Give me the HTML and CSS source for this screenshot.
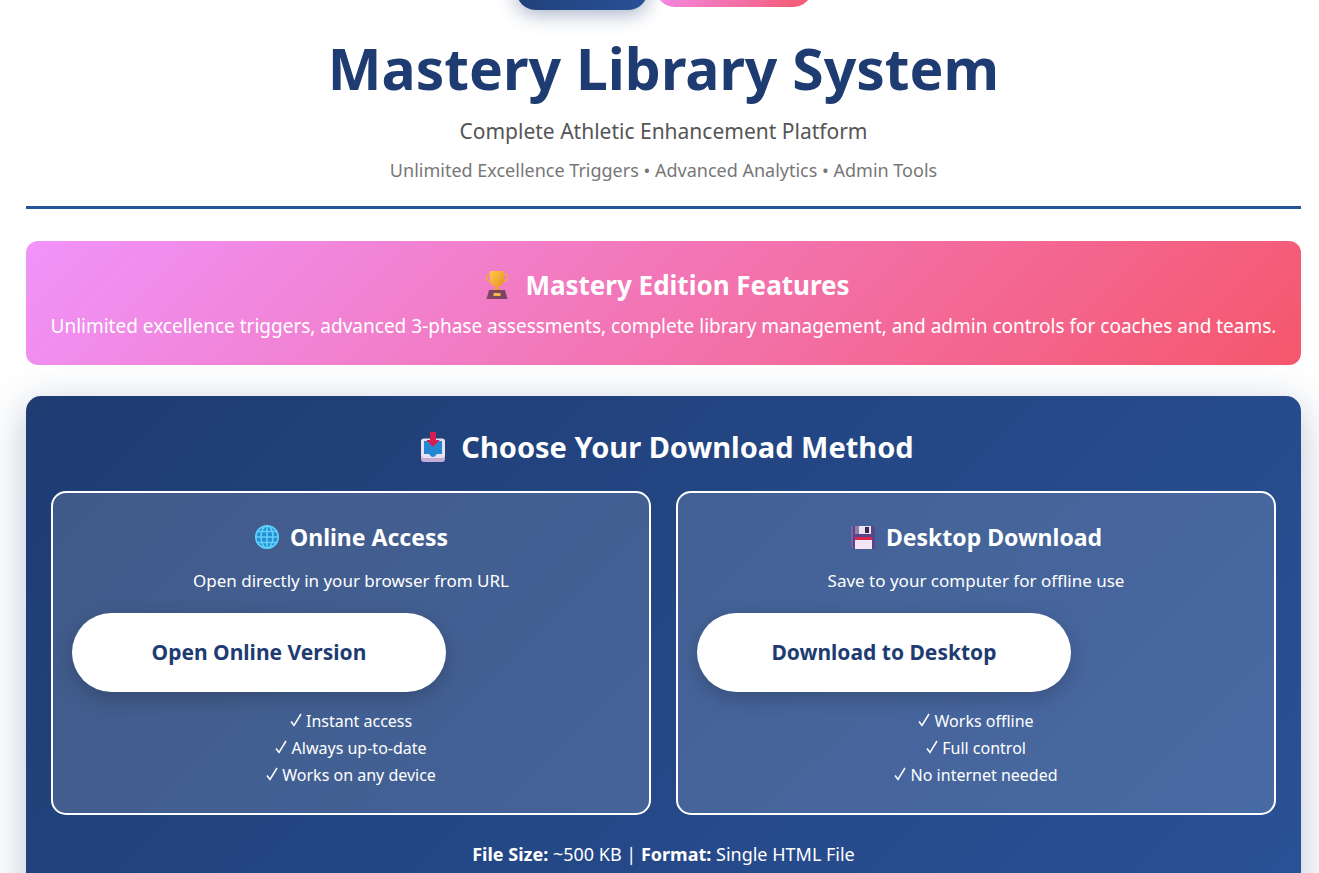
FILE: index.html
```html
<!DOCTYPE html>
<html lang="en">
<head>
  <meta charset="UTF-8" />
  <meta name="viewport" content="width=device-width, initial-scale=1.0">
  <title>Mastery Library System</title>
  <link rel="stylesheet" href="styles.css">
</head>
<body>
  <div class="container">
    <header class="header">
      <div class="badges">
        <span class="badge badge-blue"></span>
        <span class="badge badge-pink"></span>
      </div>
      <h1>Mastery Library System</h1>
      <p class="subtitle">Complete Athletic Enhancement Platform</p>
      <p class="tagline">Unlimited Excellence Triggers • Advanced Analytics • Admin Tools</p>
    </header>

    <section class="features">
      <h2>
        <svg class="icon icon-trophy" viewBox="0 0 28 30" aria-hidden="true">
          <defs>
            <linearGradient id="gold" x1="0" y1="0" x2="1" y2="1">
              <stop offset="0" stop-color="#ffc850" />
              <stop offset="0.6" stop-color="#f0a52d" />
              <stop offset="1" stop-color="#d8832c" />
            </linearGradient>
          </defs>
          <path d="M8 4.500H6a2.500 2.500 0 0 0-2.500 2.500c0 3 2 4.500 5.500 4.500M20 4.500h2A2.500 2.500 0 0 1 24.500 7c0 3-2 4.500-5.500 4.500" fill="none" stroke="#eda943" stroke-width="1.600" />
          <path d="M7 1h14v8c0 4-2 7-5.500 7.500V18l2.500 2v1h-8v-1l2.500-2v-1.500C9 16 7 13 7 9z" fill="url(#gold)" />
          <path d="M6 20h16l2.500 9h-21z" fill="#7d4763" />
          <rect x="10.500" y="23" width="7" height="3" fill="#f5b94f" />
        </svg>
        Mastery Edition Features
      </h2>
      <p>Unlimited excellence triggers, advanced 3-phase assessments, complete library management, and admin controls for coaches and teams.</p>
    </section>

    <section class="download">
      <h2>
        <svg class="icon icon-inbox" viewBox="0 0 28 32" aria-hidden="true">
          <rect x="2" y="8" width="24" height="23" rx="3" fill="#c3acd6" />
          <rect x="2" y="7.500" width="24" height="19.500" rx="3" fill="#e9e1ee" />
          <path d="M5 10h18v13h-5c-1 0-1 3-4 3s-3-3-4-3H5z" fill="#2587d4" />
          <path d="M11 1h6v8h3.700L14 16 7.300 9H11z" fill="#d71e50" />
        </svg>
        Choose Your Download Method
      </h2>

      <div class="options">
        <div class="option">
          <h3>
            <svg class="icon icon-globe" viewBox="0 0 26 26" aria-hidden="true">
              <circle cx="13" cy="13" r="12" fill="#258fd0" />
              <g fill="none" stroke="#62d0fb" stroke-width="1.600">
                <circle cx="13" cy="13" r="11.200" />
                <ellipse cx="13" cy="13" rx="6" ry="11.200" />
                <path d="M13 2v22M2 13h22M4 7.500h18M4 18.500h18" />
              </g>
            </svg>
            Online Access
          </h3>
          <p>Open directly in your browser from URL</p>
          <button type="button" class="download-btn">Open Online Version</button>
          <ul>
            <li><svg class="check" viewBox="0 0 12 14" aria-hidden="true"><path d="M1 8.500L4 12.500L11 1" /></svg> Instant access</li>
            <li><svg class="check" viewBox="0 0 12 14" aria-hidden="true"><path d="M1 8.500L4 12.500L11 1" /></svg> Always up-to-date</li>
            <li><svg class="check" viewBox="0 0 12 14" aria-hidden="true"><path d="M1 8.500L4 12.500L11 1" /></svg> Works on any device</li>
          </ul>
        </div>

        <div class="option">
          <h3>
            <svg class="icon icon-floppy" viewBox="0 0 26 26" aria-hidden="true">
              <path d="M1 2h23l1 1v22H3l-2-2z" fill="#59458a" />
              <path d="M1 2h2v23l-2-2z" fill="#7662a7" />
              <rect x="5" y="2" width="16" height="8" fill="#e9e2f0" />
              <rect x="5" y="2" width="4" height="8" fill="#8f80ac" />
              <rect x="15" y="3" width="4" height="6" fill="#3b2552" />
              <rect x="5" y="13" width="17" height="12" fill="#f4e5f2" />
              <rect x="5" y="13" width="17" height="3" fill="#dc2450" />
            </svg>
            Desktop Download
          </h3>
          <p>Save to your computer for offline use</p>
          <button type="button" class="download-btn">Download to Desktop</button>
          <ul>
            <li><svg class="check" viewBox="0 0 12 14" aria-hidden="true"><path d="M1 8.500L4 12.500L11 1" /></svg> Works offline</li>
            <li><svg class="check" viewBox="0 0 12 14" aria-hidden="true"><path d="M1 8.500L4 12.500L11 1" /></svg> Full control</li>
            <li><svg class="check" viewBox="0 0 12 14" aria-hidden="true"><path d="M1 8.500L4 12.500L11 1" /></svg> No internet needed</li>
          </ul>
        </div>
      </div>

      <p class="file-info"><strong>File Size:</strong> ~500 KB | <strong>Format:</strong> Single HTML File</p>
    </section>
  </div>
</body>
</html>
```
FILE: styles.css
```css
* { margin: 0; padding: 0; box-sizing: border-box; }
body {
  font-family: 'Segoe UI', 'Noto Sans', sans-serif;
  background: #fff;
  color: #333;
}
.container {
  height: 100vh;
  overflow: hidden;
  padding: 0 18px 0 26px;
}
/* Header */
.header {
  text-align: center;
  border-bottom: 3px solid #2a5298;
  padding-bottom: 23px;
  margin-bottom: 32px;
}
.badges {
  display: flex;
  justify-content: center;
  gap: 8px;
  height: 40px;
  margin-top: -30px;
}
.badge { border-radius: 20px; }
.badge-blue {
  width: 132px;
  height: 40px;
  background: linear-gradient(135deg, #1e3c72, #2a5298);
  box-shadow: 0 4px 20px rgba(30,60,114,0.4);
}
.badge-pink {
  width: 156px;
  height: 37px;
  background: linear-gradient(135deg, #f093fb, #f5576c);
}
h1 {
  font-size: 57px;
  line-height: 76px;
  color: #1e3c72;
  margin: 20px 0 10px;
}
.subtitle {
  font-size: 21px;
  line-height: 30px;
  color: #555;
  margin-bottom: 11px;
}
.tagline {
  font-size: 18px;
  line-height: 26px;
  color: #777;
}
/* Shared headings */
h2, h3 {
  display: flex;
  justify-content: center;
  align-items: center;
}
h2 { padding-left: 6px; }
/* Features banner */
.features {
  background: linear-gradient(135deg, #f093fb, #f5576c);
  color: #fff;
  text-align: center;
  border-radius: 12px;
  padding: 25px 20px;
  margin-bottom: 31px;
}
.features h2 {
  font-size: 26px;
  line-height: 38px;
  gap: 14px;
  margin-bottom: 8px;
}
.features p {
  font-size: 19px;
  line-height: 28px;
}
/* Download panel */
.download {
  background: linear-gradient(135deg, #1e3c72, #2a5298);
  color: #fff;
  text-align: center;
  border-radius: 15px;
  box-shadow: 0 10px 40px rgba(30,60,114,0.3);
  padding: 30px 25px;
}
.download h2 {
  font-size: 29px;
  line-height: 42px;
  gap: 14px;
  margin-bottom: 23px;
}
.options {
  display: grid;
  grid-template-columns: 1fr 1fr;
  gap: 25px;
  margin-bottom: 25px;
}
.option {
  background: rgba(255,255,255,0.15);
  border: 2px solid #fff;
  border-radius: 15px;
  padding: 28px 19px 24px;
}
.option h3 {
  font-size: 23px;
  line-height: 32px;
  gap: 10px;
  margin-bottom: 14px;
}
.option p {
  font-size: 17px;
  line-height: 28px;
  margin-bottom: 18px;
}
.download-btn {
  display: block;
  width: 67%;
  padding: 24px;
  background: #fff;
  border: none;
  border-radius: 40px;
  box-shadow: 0 6px 20px rgba(0,0,0,0.2);
  color: #1e3c72;
  font-family: inherit;
  font-size: 21px;
  line-height: 31px;
  font-weight: 700;
  cursor: pointer;
}
.option ul {
  list-style: none;
  margin-top: 16px;
}
.option li {
  font-size: 16px;
  line-height: 27px;
}
.file-info {
  font-size: 18px;
  line-height: 28px;
  padding-bottom: 40px;
}
/* Icons */
.icon { flex: none; }
.icon-trophy { width: 28px; height: 30px; }
.icon-inbox { width: 28px; height: 32px; }
.icon-globe, .icon-floppy { width: 26px; height: 26px; }
.check {
  width: 12px;
  height: 14px;
  fill: none;
  stroke: #fff;
  stroke-width: 1.5;
}
```
